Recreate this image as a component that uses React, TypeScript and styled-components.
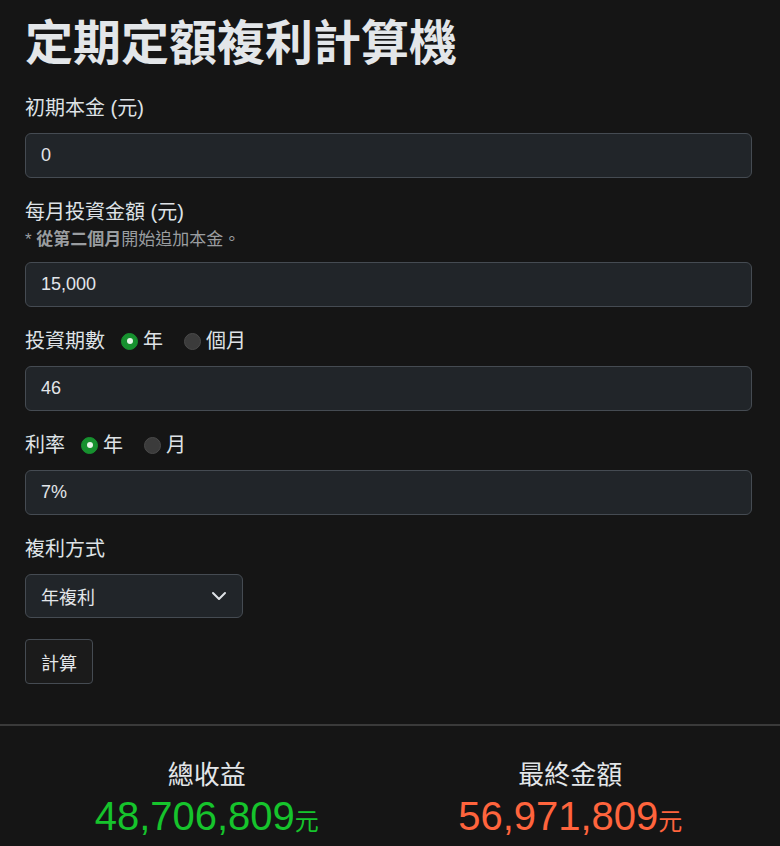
import React, { useState } from 'react';
import styled, { createGlobalStyle } from 'styled-components';

const GlobalStyle = createGlobalStyle`
  body {
    margin: 0;
    background: #151515;
    color: #dee2e6;
    font-family: "Liberation Sans", "Noto Sans CJK TC", sans-serif;
  }
`;

const Page = styled.div({
  padding: '0 28px 0 25px',
});

const Title = styled.h1({
  margin: 0,
  padding: '15px 0 20px',
  fontSize: '48px',
  lineHeight: '58px',
  fontWeight: 700,
  color: '#e3e6e9',
});

const Field = styled.div<{ $gap?: number }>(({ $gap }) => ({
  marginBottom: `${$gap ?? 19}px`,
}));

const Label = styled.div({
  display: 'flex',
  alignItems: 'center',
  fontSize: '20px',
  lineHeight: '30px',
  marginBottom: '10px',
});

const Hint = styled.div({
  fontSize: '17px',
  lineHeight: '24px',
  color: '#9a9da0',
  marginTop: '-9px',
  marginBottom: '10px',
  b: {
    fontWeight: 700,
  },
});

const Input = styled.input({
  boxSizing: 'border-box',
  display: 'block',
  width: '100%',
  height: '45px',
  padding: '0 15px',
  fontSize: '18px',
  fontFamily: 'inherit',
  color: '#e3e6e9',
  background: '#212529',
  border: '1px solid #454b52',
  borderRadius: '6px',
  outline: 'none',
});

const RadioGroup = styled.label({
  display: 'inline-flex',
  alignItems: 'center',
  gap: '5px',
  marginLeft: '16px',
  cursor: 'pointer',
  '& + &': {
    marginLeft: '21px',
  },
});

const RadioDot = styled.span<{ $on: boolean }>(({ $on }) => ({
  boxSizing: 'border-box',
  width: '17px',
  height: '17px',
  borderRadius: '50%',
  background: $on ? '#17912f' : '#3b3b3b',
  border: $on ? '1px solid #17912f' : '1px solid #4a4a4a',
  display: 'flex',
  alignItems: 'center',
  justifyContent: 'center',
  '&::after': {
    content: '""',
    width: '6px',
    height: '6px',
    borderRadius: '50%',
    background: $on ? '#e8f5ea' : 'transparent',
  },
}));

const SelectBox = styled.div({
  boxSizing: 'border-box',
  width: '218px',
  height: '44px',
  padding: '0 15px',
  display: 'flex',
  alignItems: 'center',
  justifyContent: 'space-between',
  fontSize: '18px',
  color: '#e3e6e9',
  background: '#212529',
  border: '1px solid #454b52',
  borderRadius: '6px',
});

const Button = styled.button({
  boxSizing: 'border-box',
  height: '45px',
  padding: '0 15px',
  marginTop: '1px',
  fontSize: '18px',
  fontFamily: 'inherit',
  color: '#e3e6e9',
  background: '#1b1b1b',
  border: '1px solid #454b52',
  borderRadius: '4px',
});

const Divider = styled.hr({
  margin: '40px 0 0',
  border: 0,
  borderTop: '2px solid #3a3a3a',
});

const Results = styled.div({
  display: 'grid',
  gridTemplateColumns: '1fr 1fr',
  padding: '30px 28px 0 25px',
});

const Result = styled.div({
  textAlign: 'center',
});

const ResultLabel = styled.div({
  fontSize: '26px',
  lineHeight: '38px',
  color: '#e3e6e9',
});

const Amount = styled.div<{ $color: string }>(({ $color }) => ({
  fontSize: '40px',
  lineHeight: '44px',
  color: $color,
  span: {
    fontSize: '24px',
  },
}));

function Radio({ label, on, onPick }: { label: string; on: boolean; onPick: () => void }) {
  return (
    <RadioGroup onClick={onPick}>
      <RadioDot $on={on} />
      {label}
    </RadioGroup>
  );
}

function Chevron() {
  return (
    <svg width="16" height="16" viewBox="0 0 16 16" fill="none">
      <path d="M2 5l6 6 6-6" stroke="#dee2e6" strokeWidth="2" strokeLinecap="round" strokeLinejoin="round" />
    </svg>
  );
}

export default function App() {
  const [periodUnit, setPeriodUnit] = useState('year');
  const [rateUnit, setRateUnit] = useState('year');

  return (
    <>
      <GlobalStyle />
      <Page>
        <Title>定期定額複利計算機</Title>

        <Field>
          <Label>初期本金 (元)</Label>
          <Input defaultValue="0" />
        </Field>

        <Field>
          <Label>每月投資金額 (元)</Label>
          <Hint>
            * <b>從第二個月</b>開始追加本金。
          </Hint>
          <Input defaultValue="15,000" />
        </Field>

        <Field>
          <Label>
            投資期數
            <Radio label="年" on={periodUnit === 'year'} onPick={() => setPeriodUnit('year')} />
            <Radio label="個月" on={periodUnit === 'month'} onPick={() => setPeriodUnit('month')} />
          </Label>
          <Input defaultValue="46" />
        </Field>

        <Field>
          <Label>
            利率
            <Radio label="年" on={rateUnit === 'year'} onPick={() => setRateUnit('year')} />
            <Radio label="月" on={rateUnit === 'month'} onPick={() => setRateUnit('month')} />
          </Label>
          <Input defaultValue="7%" />
        </Field>

        <Field $gap={20}>
          <Label>複利方式</Label>
          <SelectBox>
            年複利
            <Chevron />
          </SelectBox>
        </Field>

        <Button>計算</Button>
      </Page>

      <Divider />

      <Results>
        <Result>
          <ResultLabel>總收益</ResultLabel>
          <Amount $color="#16c42c">
            48,706,809<span>元</span>
          </Amount>
        </Result>
        <Result>
          <ResultLabel>最終金額</ResultLabel>
          <Amount $color="#ff643d">
            56,971,809<span>元</span>
          </Amount>
        </Result>
      </Results>
    </>
  );
}
